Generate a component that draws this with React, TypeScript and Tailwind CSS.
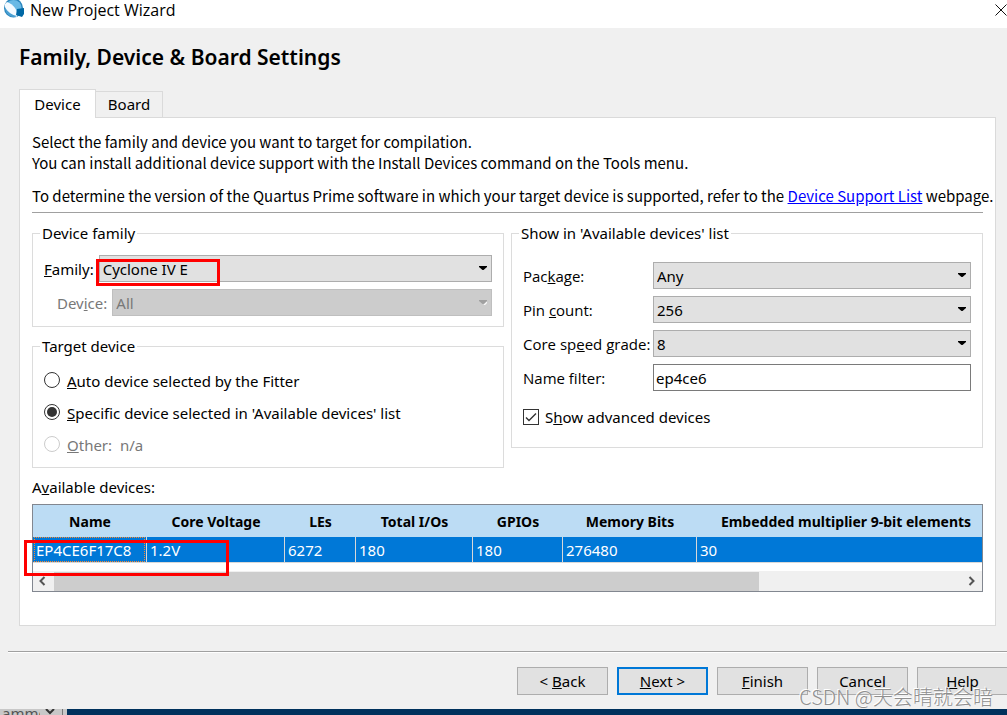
import React, { useState } from 'react';

interface SelectBoxProps {
  id: string;
  value: string;
  disabled?: boolean;
}

const columns = [
  { name: 'Name', value: 'EP4CE6F17C8', width: 'w-[114px]' },
  { name: 'Core Voltage', value: '1.2V', width: 'w-[138px]' },
  { name: 'LEs', value: '6272', width: 'w-[71px]' },
  { name: 'Total I/Os', value: '180', width: 'w-[117px]' },
  { name: 'GPIOs', value: '180', width: 'w-[90px]' },
  { name: 'Memory Bits', value: '276480', width: 'w-[134px]' },
  { name: 'Embedded multiplier 9-bit elements', value: '30', width: 'w-[298px]' },
];

const SelectBox: React.FC<SelectBoxProps> = ({ id, value, disabled }) => (
  <div className="relative min-w-0 flex-1">
    <select
      id={id}
      disabled={disabled}
      defaultValue={value}
      className="block h-[27px] w-full appearance-none border border-[#adadad] bg-[#e1e1e1] px-[3px] pt-px text-black opacity-100 disabled:border-[#bfbfbf] disabled:bg-[#cccccc] disabled:text-[#787878]"
    >
      <option>{value}</option>
    </select>
    <svg
      className={`pointer-events-none absolute top-[11px] right-[5px] ${disabled ? 'text-[#a0a0a0]' : 'text-black'}`}
      width="8"
      height="5"
      viewBox="0 0 8 5"
    >
      {disabled && <path d="M4.5 5 8 1.5V3L6 5Z" fill="#fff" />}
      <path d="M0 0H8V1L4.5 4H3.5L0 1Z" fill="currentColor" />
    </svg>
  </div>
);

const Radio: React.FC<{ id: string; checked?: boolean; disabled?: boolean; children: React.ReactNode }> = ({
  id,
  checked,
  disabled,
  children,
}) => (
  <div className="flex h-8 items-center gap-[7px]">
    <input
      type="radio"
      id={id}
      name="target"
      defaultChecked={checked}
      disabled={disabled}
      className="size-4 appearance-none rounded-full border border-[#333] bg-white bg-clip-content p-[2px] checked:bg-[#333] disabled:border-[#ccc]"
    />
    <label htmlFor={id} className={`pt-[2px] whitespace-pre ${disabled ? 'text-[#787878]' : ''}`}>
      {children}
    </label>
  </div>
);

const Group: React.FC<{ title: string; className?: string; children: React.ReactNode }> = ({
  title,
  className = '',
  children,
}) => (
  <fieldset className={`min-w-0 border border-[#dcdcdc] px-[11px] ${className}`}>
    <legend className="-ml-1 px-[2px]">{title}</legend>
    {children}
  </fieldset>
);

const Button: React.FC<{ primary?: boolean; children: React.ReactNode }> = ({ primary, children }) => (
  <button
    type="button"
    className={`h-7 w-[91px] shrink-0 bg-[#e1e1e1] ${primary ? 'border-2 border-[#0078d7]' : 'border border-[#adadad]'}`}
  >
    {children}
  </button>
);

export default function App() {
  const [filter, setFilter] = useState<string>('ep4ce6');
  const [advanced, setAdvanced] = useState<boolean>(true);

  return (
    <div className="relative flex h-screen flex-col overflow-hidden bg-[#f0f0f0] font-['Noto_Sans','Noto_Sans_CJK_SC',sans-serif] text-[15px] leading-[21px] text-black">
      <header className="flex h-7 shrink-0 items-start justify-between bg-white pl-1">
        <div className="flex items-start gap-[5px]">
          <svg width="21" height="19" viewBox="0 0 21 19">
            <circle cx="9.5" cy="8" r="9.5" fill="#2b86bd" />
            <circle cx="9.5" cy="8" r="8" fill="#69b9e5" />
            <path d="M1 4 3 2C6 3 9 5 11 8C13 11 14 14 13 17C8 16 3 12 1 7Z" fill="#f4faff" />
            <path d="M1 8C4 12 8 15 13 16C8 19 2 15 1 8Z" fill="#4aa0d3" />
            <path d="M13 9 20 8V14L18 17 12 15Z" fill="#0068a5" />
          </svg>
          <span className="font-['Open_Sans',sans-serif] text-[16px] leading-[20px]">New Project Wizard</span>
        </div>
        <button type="button" aria-label="Close" className="-mr-px pt-1">
          <svg width="13" height="12" viewBox="0 0 13 12" stroke="#111" fill="none">
            <path d="M0.5 0.5 11.5 11.5M11.5 0.5 0.5 11.5" />
          </svg>
        </button>
      </header>

      <main className="px-[11px] pl-[19px]">
        <h1 className="pt-[15px] text-[21px] leading-7 font-semibold">Family, Device &amp; Board Settings</h1>

        <div role="tablist" className="relative z-10 -mb-px flex items-end pt-[18px]">
          <button type="button" role="tab" aria-selected className="h-[29px] w-[77px] border border-b-0 border-[#dadada] bg-white">
            Device
          </button>
          <button type="button" role="tab" className="mb-px h-[26px] w-[67px] border border-b-0 border-l-0 border-[#dadada] bg-[#f0f0f0]">
            Board
          </button>
        </div>

        <section className="border border-[#dadada] bg-white px-3 pt-[13px] pb-[33px]">
          <div className="font-['Noto_Sans_CJK_SC',sans-serif]">
            <p>Select the family and device you want to target for compilation.</p>
            <p>You can install additional device support with the Install Devices command on the Tools menu.</p>
            <p className="mt-3 border-b border-[#a0a0a0] pb-[6px] whitespace-nowrap">
              To determine the version of the Quartus Prime software in which your target device is supported, refer to the{' '}
              <a href="#devices" className="text-[#0000ff] underline">
                Device Support List
              </a>{' '}
              webpage.
            </p>
          </div>

          <div className="mt-[10px] grid grid-cols-2 items-start gap-[7px]">
            <div className="flex flex-col gap-[9px]">
              <Group title="Device family" className="pb-[10px]">
                <div className="mt-[11px] flex items-center gap-[5px]">
                  <label htmlFor="family" className="pt-[2px]">
                    <u>F</u>amily:
                  </label>
                  <div className="relative flex flex-1">
                    <SelectBox id="family" value="Cyclone IV E" />
                    <div className="pointer-events-none absolute top-1 -left-[3px] h-[27px] w-[124px] border-3 border-[#ff0000]" />
                  </div>
                </div>
                <div className="mt-[7px] flex items-center gap-[5px] pl-[13px]">
                  <label htmlFor="device" className="pt-[2px] text-[#787878]">
                    Dev<u>i</u>ce:
                  </label>
                  <SelectBox id="device" value="All" disabled />
                </div>
              </Group>

              <Group title="Target device" className="pb-[7px]">
                <div className="mt-[7px]">
                  <Radio id="auto">
                    <u>A</u>uto device selected by the Fitter
                  </Radio>
                  <Radio id="specific" checked>
                    <u>S</u>pecific device selected in 'Available devices' list
                  </Radio>
                  <Radio id="other" disabled>
                    <u>O</u>ther:{'  '}n/a
                  </Radio>
                </div>
              </Group>
            </div>

            <Group title="Show in 'Available devices' list" className="pb-[19px]">
              <div className="mt-[18px] flex flex-col gap-[7px]">
                <div className="flex items-center">
                  <label htmlFor="package" className="w-[130px] pt-[2px] font-['Open_Sans',sans-serif]">
                    Pac<u>k</u>age:
                  </label>
                  <SelectBox id="package" value="Any" />
                </div>
                <div className="flex items-center">
                  <label htmlFor="pins" className="w-[130px] pt-[2px] font-['Open_Sans',sans-serif]">
                    Pin <u>c</u>ount:
                  </label>
                  <SelectBox id="pins" value="256" />
                </div>
                <div className="flex items-center">
                  <label htmlFor="speed" className="w-[130px] pt-[2px] font-['Open_Sans',sans-serif]">
                    Core sp<u>e</u>ed grade:
                  </label>
                  <SelectBox id="speed" value="8" />
                </div>
                <div className="flex items-center">
                  <label htmlFor="filter" className="w-[130px] pt-[2px] font-['Open_Sans',sans-serif]">
                    Name filter:
                  </label>
                  <input
                    id="filter"
                    type="text"
                    value={filter}
                    onChange={(e) => setFilter(e.target.value)}
                    className="h-[27px] min-w-0 flex-1 border border-[#7a7a7a] bg-white px-[2px]"
                  />
                </div>
              </div>
              <div className="mt-[14px] flex items-center gap-[6px]">
                <div className="relative size-4">
                  <input
                    id="advanced"
                    type="checkbox"
                    checked={advanced}
                    onChange={(e) => setAdvanced(e.target.checked)}
                    className="block size-4 appearance-none border border-[#333] bg-white"
                  />
                  {advanced && (
                    <svg className="pointer-events-none absolute inset-0" width="16" height="16" viewBox="0 0 16 16">
                      <path d="M3 8.5 6 11.5 13 4.5" fill="none" stroke="#333" strokeWidth="1.4" />
                    </svg>
                  )}
                </div>
                <label htmlFor="advanced" className="pt-[2px]">
                  S<u>h</u>ow advanced devices
                </label>
              </div>
            </Group>
          </div>

          <h2 id="available" className="mt-[9px] mb-[6px]">
            A<u>v</u>ailable devices:
          </h2>
          <div className="relative">
            <div className="overflow-hidden border border-[#828790] bg-white">
              <table aria-labelledby="available" className="w-[962px] table-fixed border-separate border-spacing-0">
                <thead>
                  <tr className="h-8 bg-[#bcdcf4]">
                    {columns.map((col) => (
                      <th key={col.name} className={`p-0 text-[14px] font-bold ${col.width}`}>
                        {col.name}
                      </th>
                    ))}
                  </tr>
                </thead>
                <tbody>
                  <tr className="h-[26px] bg-[#0078d7] text-white">
                    {columns.map((col, i) => (
                      <td key={col.name} className="relative border-r border-b border-[#d8d8d8] pt-[2px] pr-0 pb-0 pl-[3px]">
                        {i === 0 && <span className="absolute inset-y-0 right-px left-px border border-dotted border-[#ff8728]" />}
                        {col.value}
                      </td>
                    ))}
                  </tr>
                </tbody>
              </table>
              <div className="mt-2 flex h-5 items-center bg-[#f0f0f0] text-[#555]">
                <button type="button" aria-label="Scroll left" className="flex w-[21px] pl-[5px]">
                  <svg width="8" height="10" viewBox="0 0 8 10" fill="none" stroke="currentColor" strokeWidth="2">
                    <path d="M6.5 1 2.5 5 6.5 9" />
                  </svg>
                </button>
                <div className="flex-1">
                  <div className="h-[19px] w-[705px] bg-[#cdcdcd]" />
                </div>
                <button type="button" aria-label="Scroll right" className="flex w-[21px] justify-center">
                  <svg width="8" height="10" viewBox="0 0 8 10" fill="none" stroke="currentColor" strokeWidth="2">
                    <path d="M1.5 1 5.5 5 1.5 9" />
                  </svg>
                </button>
              </div>
            </div>
            <div className="pointer-events-none absolute top-9 -left-2 h-9 w-[205px] border-3 border-[#ff0000]" />
          </div>
        </section>
      </main>

      <footer className="mt-[25px] ml-2 border-t border-[#a0a0a0]">
        <div className="-mr-px flex justify-end gap-[9px] border-t border-white pt-[14px]">
          <Button>
            &lt; <u>B</u>ack
          </Button>
          <Button primary>
            <u>N</u>ext &gt;
          </Button>
          <Button>
            <u>F</u>inish
          </Button>
          <Button>Cancel</Button>
          <Button>
            <u>H</u>elp
          </Button>
        </div>
      </footer>

      {/* sliver of the window behind the wizard */}
      <div className="mt-auto flex h-[6px] shrink-0 overflow-hidden bg-[#00315c]">
        <div className="flex w-[67px] items-start gap-1 bg-[#c8c8c8] text-[#555]">
          <span className="w-10 overflow-hidden pl-[2px] leading-[8px]">amme</span>
          <svg width="12" height="6" viewBox="0 0 12 6" fill="none" stroke="#333" strokeWidth="2">
            <path d="M2 0 6 4 10 0" />
          </svg>
          <span className="ml-[2px] h-full w-px bg-[#777]" />
        </div>
      </div>

      <div className="pointer-events-none absolute right-[14px] bottom-[6px] font-['Noto_Sans_CJK_SC',sans-serif] text-[20px] leading-6 font-light whitespace-nowrap text-[#909090] [text-shadow:-1px_-1px_0_#fff]">
        CSDN @天会晴就会暗
      </div>
    </div>
  );
}
